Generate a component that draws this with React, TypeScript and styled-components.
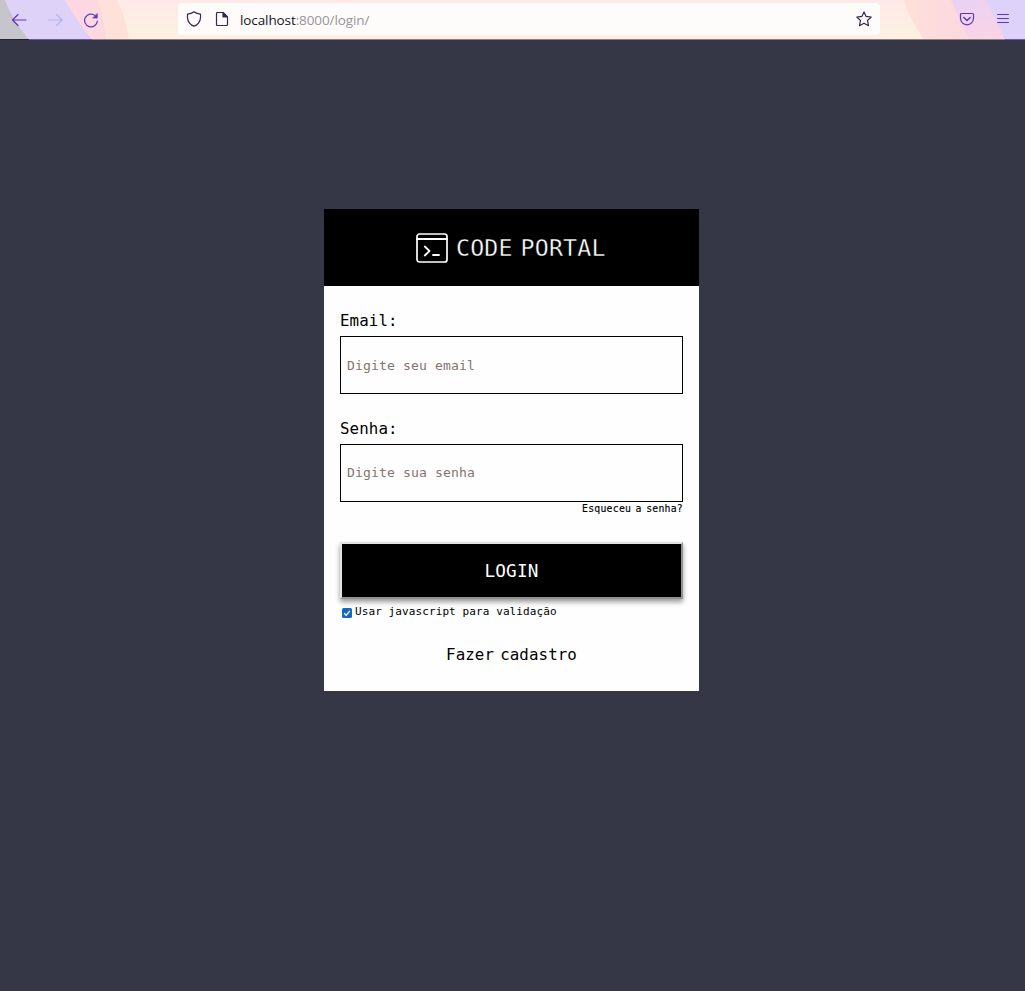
import React from "react";
import styled, { createGlobalStyle } from "styled-components";

const GlobalStyle = createGlobalStyle`
  * { box-sizing: border-box; }
  html, body { margin: 0; padding: 0; background: #353746; }
`;

const mono = `"DejaVu Sans Mono", "Liberation Mono", monospace`;

const Page = styled.div`
  width: 100%;
  height: 991px;
  display: flex;
  flex-direction: column;
  background: #353746;
  overflow: hidden;
`;

const Toolbar = styled.header`
  position: relative;
  height: 40px;
  flex: none;
  display: flex;
  align-items: flex-start;
  background: linear-gradient(#fee9e7, #fdf1e2);
`;

const Theme = styled.svg`
  position: absolute;
  inset: 0;
  width: 1025px;
  height: 40px;
`;

const NavGroup = styled.div`
  position: relative;
  width: 178px;
  height: 39px;
  padding-left: 11px;
  display: flex;
  align-items: center;
  gap: 20px;
`;

const AddressBar = styled.div`
  position: relative;
  width: 702px;
  height: 32px;
  margin-top: 3px;
  padding: 0 8px;
  display: flex;
  align-items: center;
  background: #fefcfb;
  border-radius: 4px;
`;

const Address = styled.span`
  flex: 1;
  margin-left: 10px;
  padding-top: 1px;
  font: 13.5px/20px "Open Sans", "Noto Sans", sans-serif;
  letter-spacing: -0.1px;
  color: #98949a;
  b { font-weight: 400; color: #15141a; }
`;

const FileSlot = styled.span`
  display: flex;
  margin-left: 12px;
`;

const MenuGroup = styled.div`
  position: relative;
  height: 38px;
  margin-left: 79px;
  display: flex;
  align-items: center;
  gap: 20px;
`;

const Icon = styled.svg<{ $color?: string }>`
  display: block;
  flex: none;
  fill: none;
  stroke: ${(p) => p.$color ?? "#5b3bb5"};
  stroke-width: 1.2;
  stroke-linecap: round;
  stroke-linejoin: round;
`;

const Main = styled.main`
  flex: 1;
  display: flex;
  justify-content: center;
  align-items: flex-start;
  padding: 169px 2px 0 0;
`;

const Card = styled.section`
  width: 375px;
  height: 482px;
  background: #fefefe;
`;

const CardHeader = styled.div`
  height: 77px;
  display: flex;
  align-items: center;
  padding-left: 92px;
  background: #000;
  color: #fff;
`;

/* The black outline trims the strokes to a light weight on the black header. */
const Brand = styled.h1`
  margin: 0 0 0 8px;
  font: 400 23.2px/32px ${mono};
  letter-spacing: 0.2px;
  word-spacing: -6.2px;
  -webkit-text-stroke: 0.35px #000;
  white-space: nowrap;
`;

const Form = styled.form`
  display: flex;
  flex-direction: column;
  padding: 24px 16px 0;
  font-family: ${mono};
  color: #000;
`;

const Label = styled.label`
  height: 22px;
  margin-bottom: 4px;
  font-size: 15.8px;
  line-height: 22px;
  letter-spacing: 0.09px;
`;

const Input = styled.input<{ $gap?: number; $lift?: number }>`
  width: 343px;
  height: 58px;
  margin: 0 0 ${(p) => p.$gap ?? 0}px;
  padding: 0 6px ${(p) => p.$lift ?? 0}px;
  border: 1px solid #000;
  border-radius: 0;
  background: transparent;
  outline: none;
  font: 13.1px ${mono};
  letter-spacing: 0.11px;
  &::placeholder { color: #857570; opacity: 1; }
`;

const Forgot = styled.a`
  align-self: flex-end;
  height: 13px;
  font-size: 9.8px;
  line-height: 13px;
  letter-spacing: 0.24px;
  word-spacing: -1.7px;
  -webkit-text-stroke: 0.15px #000;
`;

const LoginButton = styled.button`
  width: 343px;
  height: 57px;
  margin-top: 27px;
  padding: 0;
  border: 2px solid;
  border-color: #e3e3e3 #929292 #929292 #e3e3e3;
  border-radius: 0;
  background: #000;
  color: #fff;
  font: 17.7px ${mono};
  letter-spacing: 0.15px;
  box-shadow: 0 3px 5px rgba(0, 0, 0, 0.4);
`;

const Option = styled.label`
  display: flex;
  align-items: center;
  height: 16px;
  margin: 4px 0 0 2px;
  font-size: 11px;
  letter-spacing: 0.1px;
  white-space: nowrap;
`;

const CheckMark = styled.svg`
  width: 10px;
  height: 10px;
  margin: 4px 3px 0 0;
  flex: none;
`;

const Register = styled.a`
  align-self: center;
  margin-top: 25px;
  font-size: 15.8px;
  line-height: 22px;
  letter-spacing: 0.09px;
  word-spacing: -3.5px;
`;

function ThemeArt() {
  return (
    <Theme viewBox="0 0 1025 40" preserveAspectRatio="none">
      <defs>
        <linearGradient id="peach" x1="0" x2="1">
          <stop offset="0" stopColor="#fee0d9" />
          <stop offset="1" stopColor="#fcd5e2" />
        </linearGradient>
        <linearGradient id="pink" x1="0" y1="0" x2="0.3" y2="1">
          <stop offset="0" stopColor="#e9d2f3" />
          <stop offset="1" stopColor="#f9d3e7" />
        </linearGradient>
      </defs>
      <path d="M65 0H117Q126 18 129 40H80Z" fill="#fee2d9" />
      <path d="M60 0H98Q104 18 106 40H80Z" fill="#fdd7e1" />
      <path d="M0 0H65Q76 20 92 40H0Z" fill="#dfd2f8" />
      <path d="M0 0H5Q11 18 29 40H0Z" fill="#c6c5cb" />
      <path d="M903 0H990V40H924Q912 22 903 0Z" fill="url(#peach)" />
      <path d="M951 0H1000L1006 40H970Q959 22 951 0Z" fill="url(#pink)" />
      <path d="M986 0H1025V40H1005Q996 18 986 0Z" fill="#dfd2fa" />
      <path d="M0 39.5H1025" stroke="#957e80" />
      <path d="M0 39.5H29" stroke="#25222e" />
      <path d="M29 39.5H92M1005 39.5H1025" stroke="#7251b6" />
    </Theme>
  );
}

export default function App() {
  return (
    <Page>
      <GlobalStyle />
      <Toolbar>
        <ThemeArt />
        <NavGroup>
          <Icon width="16" height="16" viewBox="0 0 16 16"><path d="M15 8H1.5M7 2.5L1.5 8L7 13.5" /></Icon>
          <Icon width="16" height="16" viewBox="0 0 16 16" $color="#adb9f2"><path d="M1.5 8H15M9.5 2.5L15 8L9.5 13.5" /></Icon>
          <Icon width="16" height="16" viewBox="0 0 16 16">
            <path d="M12.2 3.6A6.4 6.4 0 1 0 14.4 9" />
            <path d="M14.3 1.7V6.1H9.9Z" fill="#5b3bb5" strokeWidth="0.6" />
          </Icon>
        </NavGroup>
        <AddressBar>
          <Icon width="16" height="16" viewBox="0 0 16 16" $color="#38274f">
            <path d="M8 .8Q10.5 3 14.5 3.2V6.5C14.5 10.8 11.3 14.3 8 15.2C4.7 14.3 1.5 10.8 1.5 6.5V3.2Q5.5 3 8 .8Z" />
          </Icon>
          <FileSlot>
            <Icon width="16" height="16" viewBox="0 0 16 16" $color="#38274f">
              <path d="M3.5 1.5H9.2L13.5 5.8V13.5Q13.5 14.5 12.5 14.5H3.5Q2.5 14.5 2.5 13.5V2.5Q2.5 1.5 3.5 1.5Z" />
              <path d="M9 1.7V6H13.3Z" fill="#38274f" />
            </Icon>
          </FileSlot>
          <Address><b>localhost</b>:8000/login/</Address>
          <Icon width="16" height="16" viewBox="0 0 16 16" $color="#38274f">
            <path d="M8 .9L10.1 5.4L15.2 6.1L11.5 9.5L12.5 14.7L8 12.2L3.5 14.7L4.5 9.5L.8 6.1L5.9 5.4Z" />
          </Icon>
        </AddressBar>
        <MenuGroup>
          <Icon width="16" height="16" viewBox="0 0 16 16">
            <path d="M2.5 2.5H13.5Q14.5 2.5 14.5 3.5V7.3A6.5 6.5 0 0 1 1.5 7.3V3.5Q1.5 2.5 2.5 2.5Z" />
            <path d="M4.8 6.5L8 9.5L11.2 6.5" strokeWidth="1.5" />
          </Icon>
          <Icon width="16" height="16" viewBox="0 0 16 16"><path d="M2.5 3.5H13.5M2.5 7.5H13.5M2.5 11.5H13.5" strokeWidth="1" /></Icon>
        </MenuGroup>
      </Toolbar>
      <Main>
        <Card>
          <CardHeader>
            <svg width="32" height="30" viewBox="0 0 32 30" fill="none" stroke="#fff" strokeWidth="1.8" strokeLinecap="round" strokeLinejoin="round">
              <rect x="1" y="1" width="30" height="28" rx="2.5" strokeWidth="1.7" />
              <path d="M1 6H31M8.8 13.5L13.5 18L8.8 22.5M17 22H23" />
            </svg>
            <Brand>CODE PORTAL</Brand>
          </CardHeader>
          <Form onSubmit={(e) => e.preventDefault()}>
            <Label htmlFor="email">Email:</Label>
            <Input id="email" type="email" placeholder="Digite seu email" $gap={24} />
            <Label htmlFor="senha">Senha:</Label>
            <Input id="senha" type="password" placeholder="Digite sua senha" $lift={2} />
            <Forgot>Esqueceu a senha?</Forgot>
            <LoginButton type="submit">LOGIN</LoginButton>
            <Option>
              <CheckMark viewBox="0 0 10 10">
                <rect width="10" height="10" rx="1.5" fill="#1268c4" />
                <path d="M2.2 5.2L4.2 7.2L7.9 2.9" fill="none" stroke="#fff" strokeWidth="1.3" />
              </CheckMark>
              Usar javascript para validação
            </Option>
            <Register>Fazer cadastro</Register>
          </Form>
        </Card>
      </Main>
    </Page>
  );
}
